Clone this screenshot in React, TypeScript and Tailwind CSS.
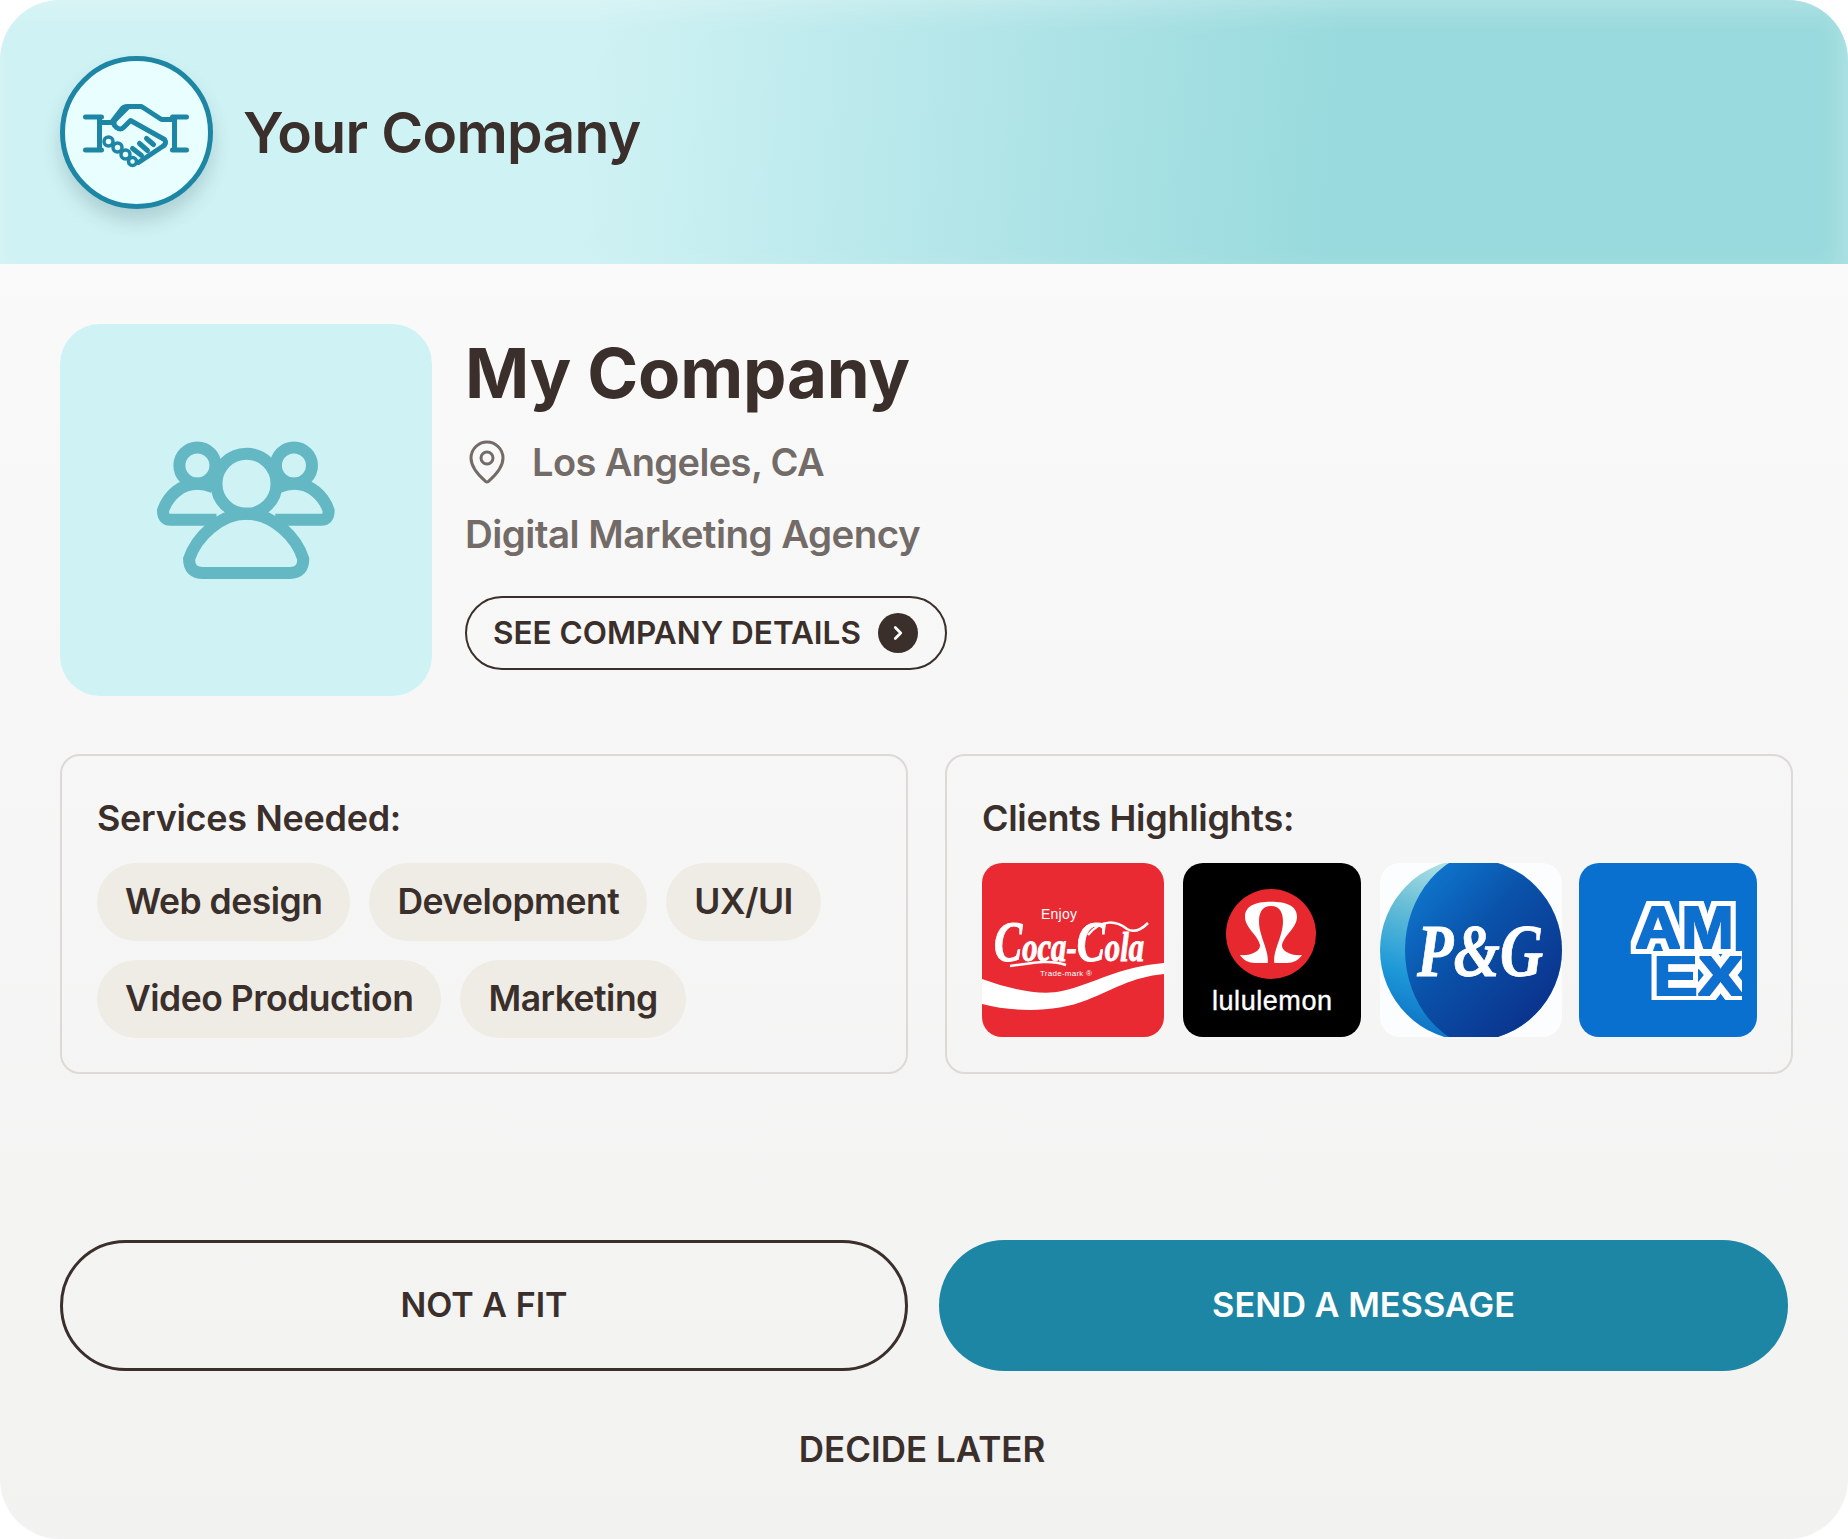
import { ChevronRight, MapPin } from "lucide-react";

const services = [
  ["Web design", "Development", "UX/UI"],
  ["Video Production", "Marketing"],
];

const HandshakeIcon = () => (
  <svg viewBox="1.5 2.5 130 80" className="w-[130px] h-[80px]" fill="none" stroke="#1e86a5" strokeWidth="5" strokeLinecap="round" strokeLinejoin="round">
    <path d="M15 27.5H31M29 27.5V60.5M15 60.5H31" />
    <path d="M116 27.5H102M104 27.5V60.5M116 60.5H102" />
    <path d="M30 33H41L51 20Q53 17 57 17H71L91 30H103" />
    <path d="M57 18L44 31Q42 35 46 38Q50 41 53 38L60 31L94 50Q97 54 92 57L68 73" />
    <path d="M76 49L83 55M69 54L77 61M62 59L71 66" />
    <g strokeWidth="3.5">
      <circle cx="38" cy="52" r="4.5" />
      <circle cx="47" cy="58" r="4.5" />
      <circle cx="55" cy="65" r="4.5" />
      <circle cx="62" cy="72" r="4" />
    </g>
  </svg>
);

const UsersIcon = () => (
  <svg viewBox="340 380 560 440" className="w-[187px] h-[147px]" fill="none" stroke="#63b8c4" strokeWidth="36" strokeLinejoin="round">
    <path d="M490 787H750Q790 787 790 745C770 680 700 610 620 610C540 610 470 680 448 745Q448 787 490 787Z" />
    <path d="M530 628H392Q370 628 370 600C385 555 425 520 473 520Q495 520 520 530" />
    <path d="M706 628H844Q866 628 866 600C851 555 811 520 763 520Q741 520 716 530" />
    <circle cx="473" cy="465" r="54" />
    <circle cx="762" cy="465" r="54" />
    <circle cx="620" cy="520" r="90" />
  </svg>
);

const CokeLogo = () => (
  <svg viewBox="0 0 182 174" className="w-[182px] h-[174px] rounded-[20px] bg-[#ea2a33]">
    <path fill="#fff" d="M0 116C28 126 58 133 80 128C115 120 135 104 182 100V111C150 114 130 127 105 137C75 149 35 150 0 141Z" />
    <text x="59" y="56" fontSize="14" fill="#fff" className="font-['Liberation_Sans']" textLength="36">Enjoy</text>
    <path fill="none" stroke="#fff" strokeWidth="2.5" d="M28 103C50 100 68 96 84 102M106 72C120 55 135 58 145 66C152 70 160 66 166 60" />
    <text x="12" y="98" fill="#fff" stroke="#fff" strokeWidth="1" fontWeight="700" fontStyle="italic" className="font-['Liberation_Serif']" textLength="150" lengthAdjust="spacingAndGlyphs">
      <tspan fontSize="58">C</tspan>
      <tspan fontSize="42">oca-</tspan>
      <tspan fontSize="58">C</tspan>
      <tspan fontSize="42">ola</tspan>
    </text>
    <text x="58" y="113" fontSize="8" fill="#fff" className="font-['Liberation_Sans']" textLength="52">Trade-mark ®</text>
  </svg>
);

const LululemonLogo = () => (
  <svg viewBox="0 0 178 174" className="w-[178px] h-[174px] rounded-[20px] bg-black">
    <circle cx="88" cy="71" r="45" fill="#e8282f" />
    <path fill="#fff" d="M88 38.7C72 38.7 62 43 62 53.7C62 65 75 72 77 82C77.5 88 68 93 57 92C60 97 66 100 72 100L84.7 100C86 90 80 80 77 67C75 58 75 43 88 43C101 43 101 58 99 67C96 80 90 90 91.3 100L104 100C110 100 116 97 119 92C108 93 98.5 88 99 82C101 72 114 65 114 53.7C114 43 104 38.7 88 38.7Z" />
    <text x="29" y="147" fontSize="27" fill="#fff" stroke="#fff" strokeWidth="0.4" className="font-['Liberation_Sans']" textLength="120">lululemon</text>
  </svg>
);

const PgLogo = () => (
  <svg viewBox="0 0 182 174" className="w-[182px] h-[174px] rounded-[20px] bg-[#fbfdfe]">
    <defs>
      <linearGradient id="pg-edge" x1="0.6" y1="0" x2="0.2" y2="1">
        <stop offset="0" stopColor="#c8ecec" />
        <stop offset="0.35" stopColor="#6cc0d6" />
        <stop offset="0.7" stopColor="#1e9ad8" />
        <stop offset="1" stopColor="#0c6ec4" />
      </linearGradient>
      <linearGradient id="pg-main" x1="0.1" y1="0.1" x2="0.85" y2="0.9">
        <stop offset="0" stopColor="#0f78cf" />
        <stop offset="0.4" stopColor="#0a52aa" />
        <stop offset="1" stopColor="#0b2d87" />
      </linearGradient>
      <clipPath id="pg-clip">
        <circle cx="91" cy="87" r="91" />
      </clipPath>
    </defs>
    <g clipPath="url(#pg-clip)">
      <rect width="182" height="174" fill="url(#pg-edge)" />
      <ellipse cx="112" cy="87" rx="87" ry="100" fill="url(#pg-main)" />
    </g>
    <text x="37" y="113" fontSize="74" fill="#fff" stroke="#fff" strokeWidth="0.8" fontWeight="700" fontStyle="italic" className="font-['Liberation_Serif']" textLength="126" lengthAdjust="spacingAndGlyphs">P&amp;G</text>
  </svg>
);

const AmexLogo = () => (
  <svg viewBox="0 0 178 174" className="w-[178px] h-[174px] rounded-[20px] bg-[#0a70cf]">
    <defs>
      <clipPath id="amex-clip">
        <rect x="40" y="30" width="123" height="107" />
      </clipPath>
      <filter id="amex-outline" x="-20%" y="-20%" width="140%" height="140%">
        <feMorphology in="SourceAlpha" operator="dilate" radius="5.5" result="outer" />
        <feFlood floodColor="#ffffff" />
        <feComposite in2="outer" operator="in" result="white" />
        <feMorphology in="SourceAlpha" operator="dilate" radius="1.2" result="inner" />
        <feFlood floodColor="#0a70cf" />
        <feComposite in2="inner" operator="in" result="blue" />
        <feMerge>
          <feMergeNode in="white" />
          <feMergeNode in="blue" />
        </feMerge>
      </filter>
    </defs>
    <g clipPath="url(#amex-clip)">
      <g filter="url(#amex-outline)" fill="#0a70cf" fontWeight="700" className="font-['Liberation_Sans']">
        <text x="56" y="85" fontSize="60" textLength="99" lengthAdjust="spacingAndGlyphs">AM</text>
        <text x="74" y="132" fontSize="56" textLength="90" lengthAdjust="spacingAndGlyphs">EX</text>
      </g>
    </g>
  </svg>
);

export default function App() {
  return (
    <div className="w-[1848px] h-[1539px] overflow-hidden rounded-[60px] bg-gradient-to-b from-[#fbfbfb] to-[#f2f2f1] font-[Inter,sans-serif] text-[#3a2f2b]">
      <header className="h-[264px] flex items-center gap-[30px] pl-[60px] bg-[linear-gradient(95deg,#cff2f4_32%,#98dadd_72%)] shadow-[inset_0_16px_24px_rgba(255,255,255,0.18),inset_-14px_0_20px_rgba(255,255,255,0.12)]">
        <div className="w-[153px] h-[153px] shrink-0 rounded-full border-[5px] border-[#1e86a5] bg-[#e8feff] flex items-center justify-center shadow-[0_12px_18px_rgba(60,90,100,0.22)]">
          <HandshakeIcon />
        </div>
        <span className="text-[57px] font-semibold tracking-[-0.7px] translate-y-[1px]">Your Company</span>
      </header>

      <main className="pl-[60px]">
        <section className="mt-[60px] flex gap-[34px]">
          <div className="w-[372px] h-[372px] rounded-[40px] bg-[#cff3f5] flex items-center justify-center">
            <UsersIcon />
          </div>
          <div className="flex flex-col items-start">
            <h1 className="mt-[9px] -ml-[1px] text-[69px] leading-[80px] font-bold tracking-[-0.2px]">My Company</h1>
            <div className="mt-[25px] flex items-center gap-[21px] -ml-[3px] text-[38px] leading-[44px] font-semibold text-[#736b67] tracking-[-0.6px]">
              <MapPin size={48} strokeWidth={1.5} />
              <span>Los Angeles, CA</span>
            </div>
            <p className="mt-[26px] -ml-[1px] text-[38.5px] leading-[44px] font-semibold text-[#736b67] tracking-[-0.55px]">Digital Marketing Agency</p>
            <button className="mt-[40px] w-[482px] h-[74px] -ml-[1px] rounded-full border-[2.5px] border-[#3a2f2b] flex items-center gap-[17px] pl-[26px] text-[31.5px] font-semibold">
              SEE COMPANY DETAILS
              <span className="w-[40px] h-[40px] rounded-full bg-[#3a2f2b] flex items-center justify-center text-white">
                <ChevronRight size={22} strokeWidth={3} />
              </span>
            </button>
          </div>
        </section>

        <section className="mt-[58px] flex gap-[37px]">
          <div className="w-[848px] h-[320px] rounded-[20px] border-2 border-[#dcd9d6] pl-[35px] pt-[40px]">
            <h2 className="text-[36px] leading-[44px] font-semibold tracking-[-0.3px]">Services Needed:</h2>
            <div className="mt-[23px] flex flex-col gap-[19px]">
              {services.map((row) => (
                <div key={row[0]} className="flex gap-[19px]">
                  {row.map((s) => (
                    <span key={s} className="h-[78px] flex items-center px-[28px] rounded-full bg-[#efece6] text-[35.5px] font-semibold tracking-[-0.5px]">{s}</span>
                  ))}
                </div>
              ))}
            </div>
          </div>
          <div className="w-[848px] h-[320px] rounded-[20px] border-2 border-[#dcd9d6] pl-[35px] pt-[40px]">
            <h2 className="text-[36px] leading-[44px] font-semibold tracking-[-0.3px]">Clients Highlights:</h2>
            <div className="mt-[23px] flex gap-[19px]">
              <CokeLogo />
              <LululemonLogo />
              <PgLogo />
              <div className="-ml-[2px]">
                <AmexLogo />
              </div>
            </div>
          </div>
        </section>

        <section className="mt-[166px] w-[1728px] flex gap-[31px]">
          <button className="w-[848px] h-[131px] pb-[2px] rounded-full border-[3px] border-[#3a2f2b] text-[34px] font-semibold">NOT A FIT</button>
          <button className="w-[849px] h-[131px] pb-[2px] rounded-full bg-[#1e86a5] text-white text-[34.3px] font-semibold">SEND A MESSAGE</button>
        </section>

        <div className="mt-[56px] w-[1724px] text-center text-[35px] leading-[44px] font-semibold">DECIDE LATER</div>
      </main>
    </div>
  );
}
